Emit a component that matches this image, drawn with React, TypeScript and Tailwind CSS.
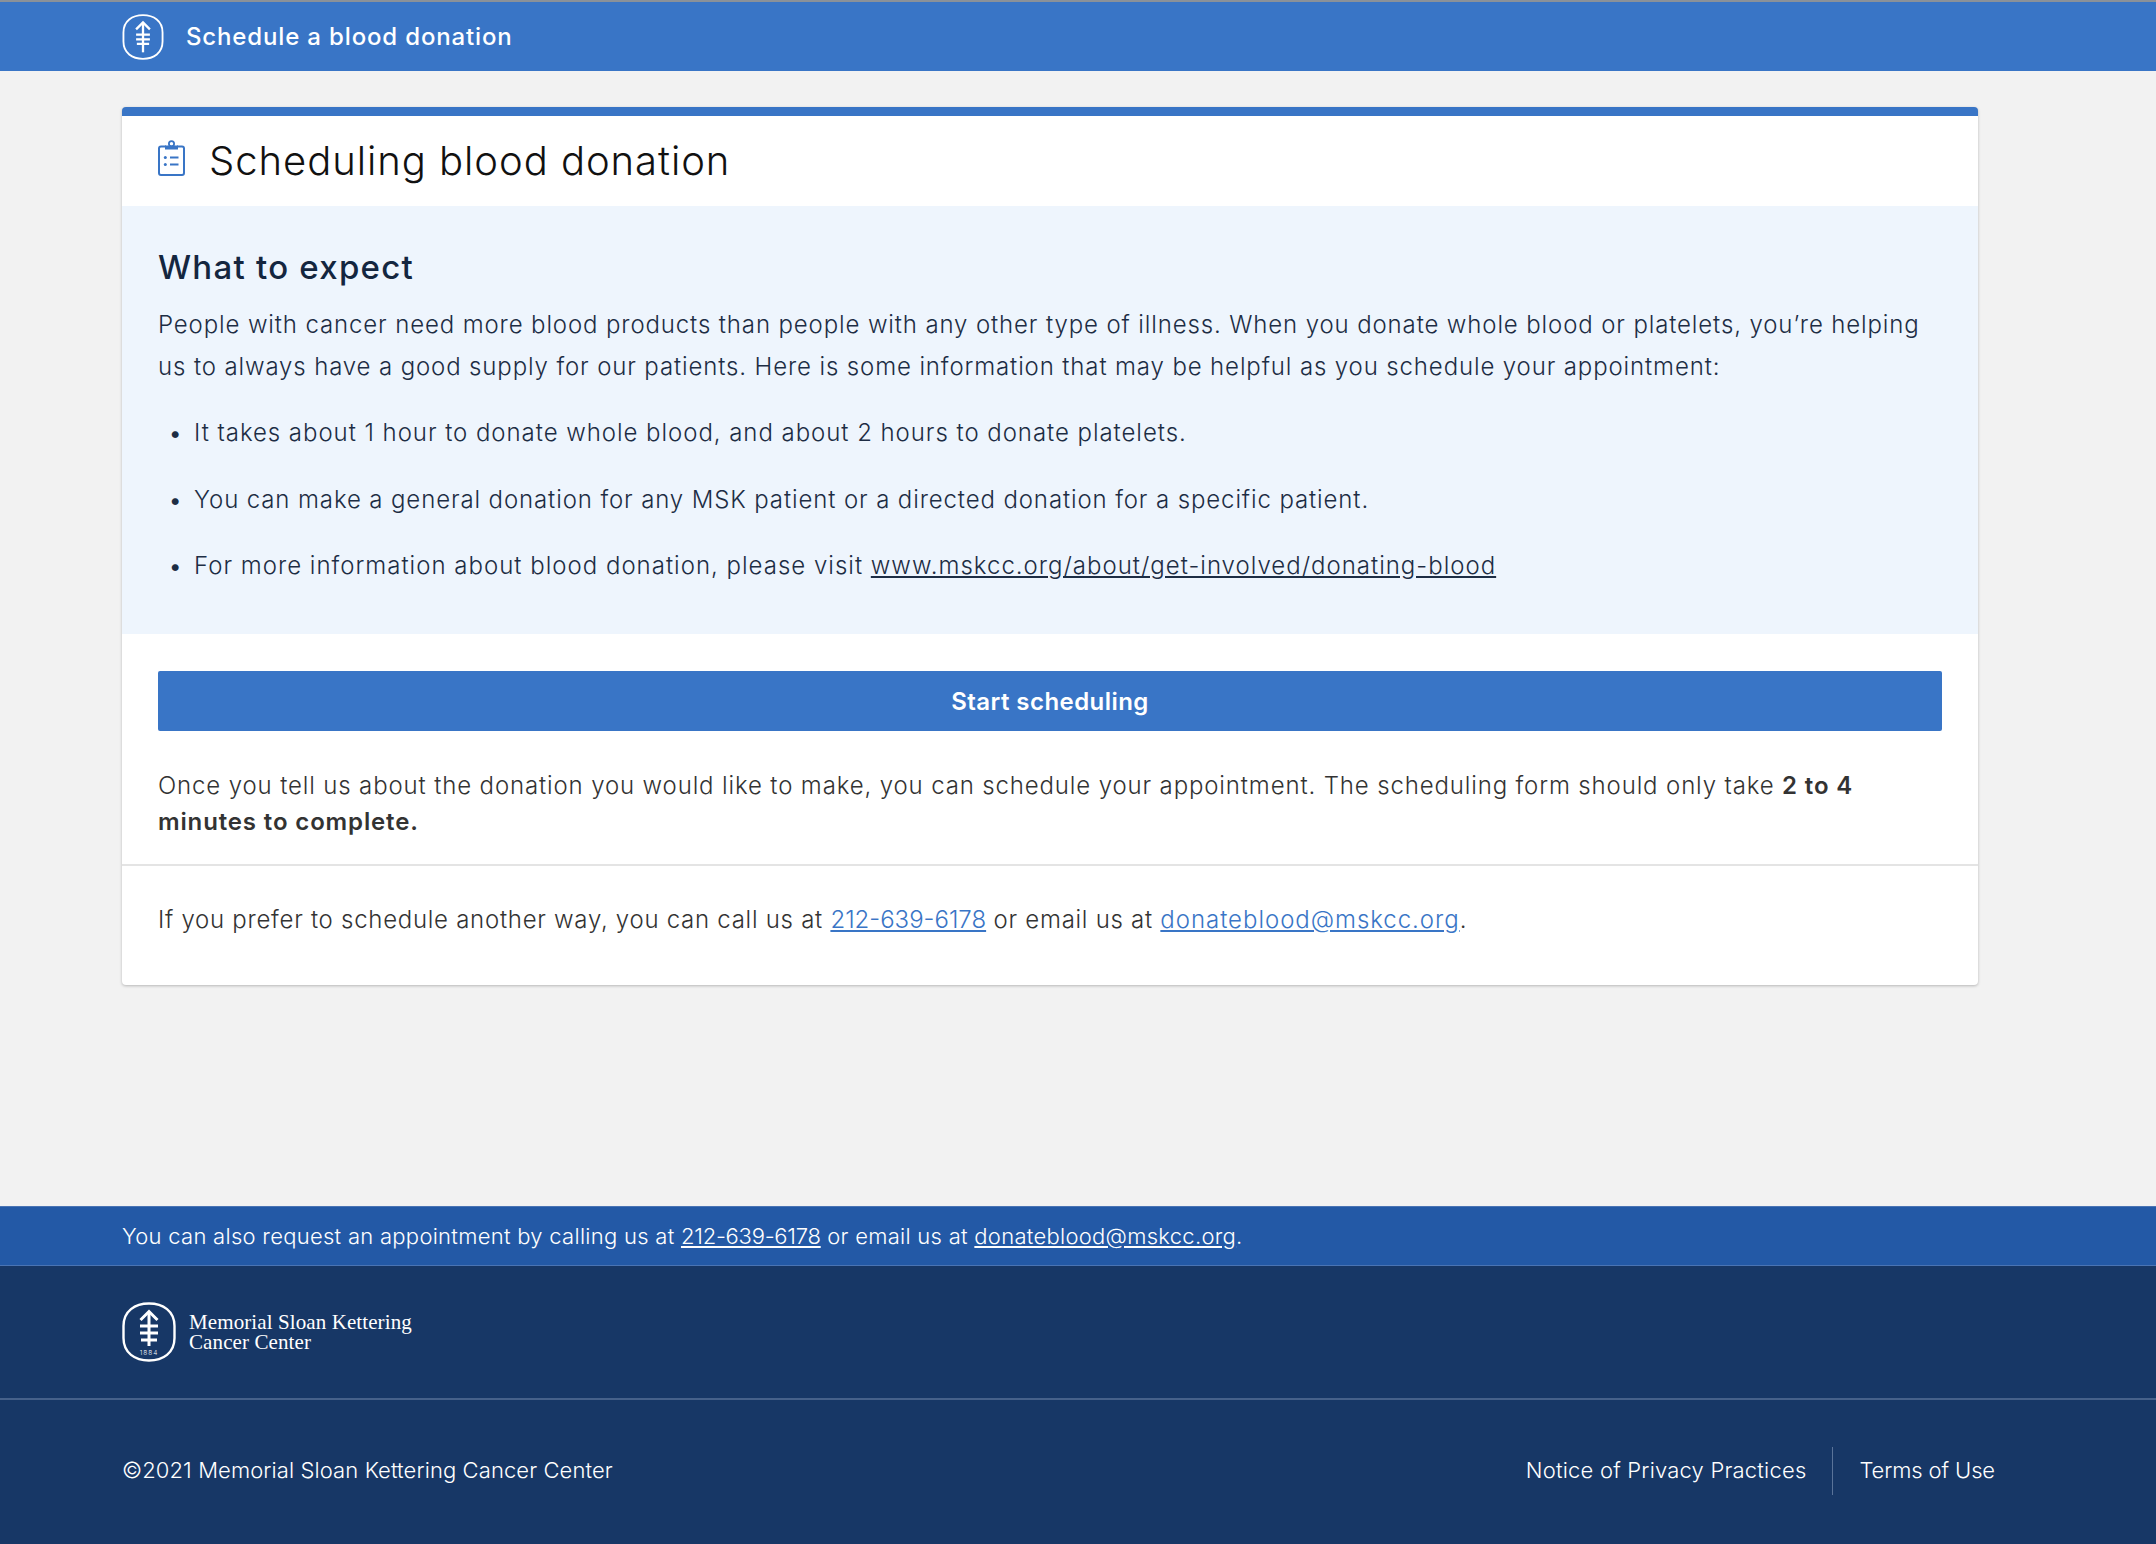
import React from 'react';

const font = "font-['Inter','Liberation_Sans',sans-serif]";

// MSK tree mark, the tall rounded badge used in the header and the footer
function TreeMark({ className, year }: { className?: string; year?: boolean }) {
  return (
    <svg viewBox="0 0 54 60" fill="none" stroke="currentColor" className={className}>
      <path
        d="M27 1.5C41 1.5 52.5 9 52.5 24V36C52.5 51 41 58.5 27 58.5S1.5 51 1.5 36V24C1.5 9 13 1.5 27 1.5Z"
        strokeWidth="2.4"
      />
      <g strokeWidth="3" strokeLinecap="butt">
        <path d={year ? 'M27 10V44' : 'M27 11V50'} />
        <path d={year ? 'M18.5 18L27 9.5L35.5 18' : 'M18 20L27 11L36 20'} />
        <path d={year ? 'M18 24H36M18 31H36M19 38H35' : 'M18 27H36M18 33H36M19 39H35'} />
      </g>
      {year && (
        <text x="27" y="53" textAnchor="middle" fontSize="6.5" fill="currentColor" stroke="none" fontFamily="Inter" letterSpacing="1">
          1884
        </text>
      )}
    </svg>
  );
}

function ClipboardIcon() {
  return (
    <svg viewBox="0 0 27 36" fill="none" stroke="#3975c6" strokeWidth="2" className="mb-[6px] h-9 w-[27px] shrink-0">
      <path d="M8 6.5H3A2 2 0 0 0 1 8.5V33A2 2 0 0 0 3 35H24A2 2 0 0 0 26 33V8.5A2 2 0 0 0 24 6.5H19" />
      <circle cx="13.5" cy="3.8" r="2.6" strokeWidth="1.8" />
      <path d="M8 6.5H19V8.5H8Z" fill="#3975c6" />
      <path d="M12 17.5H20.5M12 24.5H20.5" strokeWidth="2" />
      <circle cx="7.3" cy="17.5" r="1.5" fill="#3975c6" stroke="none" />
      <circle cx="7.3" cy="24.5" r="1.5" fill="#3975c6" stroke="none" />
    </svg>
  );
}

export default function App() {
  return (
    <div className={`${font} flex min-h-[1544px] flex-col bg-[#f2f2f2] text-[24px] font-[350] tracking-[0.72px] text-[#333]`}>
      <header className="flex h-[71px] items-center gap-[22px] border-t-2 border-[#8a9199] bg-[#3975c6] pl-[122px] text-white">
        <TreeMark className="h-[46px] w-[42px]" />
        <span className="text-[24px] font-medium tracking-[0.85px]">Schedule a blood donation</span>
      </header>

      <main className="flex-1 pl-[122px] pt-[36px]">
        <div className="w-[1856px] overflow-hidden rounded-[4px] border-t-[9px] border-[#3975c6] bg-white shadow-[0_1px_3px_rgba(0,0,0,0.25)]">
          <div className="flex h-[90px] items-center gap-[24px] pl-[36px]">
            <ClipboardIcon />
            <h1 className="text-[40px] font-light tracking-[0.95px] text-[#111]">Scheduling blood donation</h1>
          </div>

          <section className="h-[428px] bg-[#eef5fd] px-[36px] pt-[39px] text-[#1d2d44]">
            <h2 className="text-[33px] font-medium leading-[44px] tracking-[1.25px] text-[#14263f]">What to expect</h2>
            <p className="mt-[15px] leading-[42px] tracking-[0.87px]">
              People with cancer need more blood products than people with any other type of illness. When you donate whole blood or platelets, you’re helping us to always have a good supply for our patients. Here is some information that may be helpful as you schedule your appointment:
            </p>
            <ul className="mt-[24px] flex flex-col gap-[24.5px] leading-[42px]">
              <li className="flex tracking-[0.95px]">
                <span className="w-[36px] pl-[11px] text-[22px] font-normal">•</span>
                <span>It takes about 1 hour to donate whole blood, and about 2 hours to donate platelets.</span>
              </li>
              <li className="flex tracking-[0.88px]">
                <span className="w-[36px] pl-[11px] text-[22px] font-normal">•</span>
                <span>You can make a general donation for any MSK patient or a directed donation for a specific patient.</span>
              </li>
              <li className="flex tracking-[1px]">
                <span className="w-[36px] pl-[11px] text-[22px] font-normal">•</span>
                <span>
                  For more information about blood donation, please visit{' '}
                  <a href="#" className="underline">www.mskcc.org/about/get-involved/donating-blood</a>
                </span>
              </li>
            </ul>
          </section>

          <div className="px-[36px] pt-[37px]">
            <button className="h-[60px] w-full rounded-[2px] bg-[#3975c6] pt-px font-semibold tracking-[0.45px] text-white">Start scheduling</button>
            <p className="mt-[37px] leading-[36px] tracking-[0.86px]">
              Once you tell us about the donation you would like to make, you can schedule your appointment. The scheduling form should only take <strong className="font-semibold">2 to 4<br />minutes to complete.</strong>
            </p>
          </div>

          <div className="mt-[24px] h-[121px] border-t-2 border-[#e4e4e4] px-[36px] pt-[36px] leading-[36px]">
            If you prefer to schedule another way, you can call us at{' '}
            <a href="#" className="tracking-normal text-[#3975c6] underline">212-639-6178</a> or email us at{' '}
            <a href="#" className="tracking-[0.96px] text-[#3975c6] underline">donateblood@mskcc.org</a>.
          </div>
        </div>
      </main>

      <footer className="text-[22px] tracking-[0.2px] text-white">
        <div className="flex h-[60px] items-center border-y border-[#4a74b4] bg-[#2359a6] pl-[122px]">
          <span className="tracking-[0.28px]">
            You can also request an appointment by calling us at <a href="#" className="tracking-[-0.25px] underline">212-639-6178</a> or email us at{' '}
            <a href="#" className="underline">donateblood@mskcc.org</a>.
          </span>
        </div>
        <div className="bg-[#173766]">
          <div className="flex h-[134px] items-center gap-[13px] border-b-2 border-[#46618a] pl-[122px]">
            <TreeMark year className="h-[60px] w-[54px]" />
            <div className="font-['Liberation_Serif',serif] text-[21px] leading-[20px] tracking-[0.1px]">
              Memorial Sloan Kettering
              <br />
              Cancer Center
            </div>
          </div>
          <div className="flex h-[144px] items-center justify-between pb-[3px] pl-[122px] pr-[161px]">
            <span className="tracking-[0.1px]">©2021 Memorial Sloan Kettering Cancer Center</span>
            <div className="flex items-center">
              <a href="#">Notice of Privacy Practices</a>
              <span className="mx-[26px] h-[48px] w-px bg-[#5a7399]" />
              <a href="#" className="tracking-[-0.12px]">Terms of Use</a>
            </div>
          </div>
        </div>
      </footer>
    </div>
  );
}
